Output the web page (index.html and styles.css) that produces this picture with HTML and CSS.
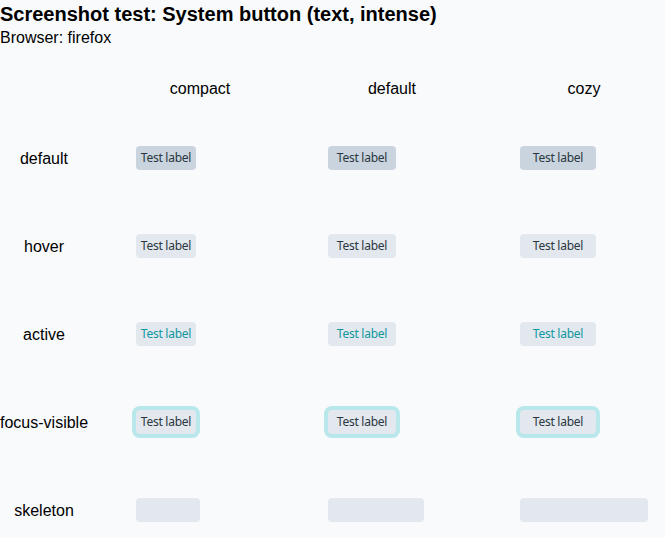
FILE: index.html
```html
<!DOCTYPE html>
<html>
<head>
<meta charset="utf-8">
<link rel="stylesheet" href="styles.css">
</head>
<body>
<header class="head">
  <h1 class="title">Screenshot test: System button (text, intense)</h1>
  <p class="browser">Browser: firefox</p>
</header>
<div class="matrix">
  <div class="corner"></div>
  <div class="colhead">compact</div>
  <div class="colhead">default</div>
  <div class="colhead">cozy</div>

  <div class="rowhead">default</div>
  <div class="cell"><button class="btn compact">Test label</button></div>
  <div class="cell"><button class="btn regular">Test label</button></div>
  <div class="cell"><button class="btn cozy">Test label</button></div>

  <div class="rowhead">hover</div>
  <div class="cell"><button class="btn compact hover">Test label</button></div>
  <div class="cell"><button class="btn regular hover">Test label</button></div>
  <div class="cell"><button class="btn cozy hover">Test label</button></div>

  <div class="rowhead">active</div>
  <div class="cell"><button class="btn compact active">Test label</button></div>
  <div class="cell"><button class="btn regular active">Test label</button></div>
  <div class="cell"><button class="btn cozy active">Test label</button></div>

  <div class="rowhead">focus-visible</div>
  <div class="cell"><button class="btn compact focus">Test label</button></div>
  <div class="cell"><button class="btn regular focus">Test label</button></div>
  <div class="cell"><button class="btn cozy focus">Test label</button></div>

  <div class="rowhead">skeleton</div>
  <div class="cell"><span class="skeleton sk-compact"></span></div>
  <div class="cell"><span class="skeleton sk-regular"></span></div>
  <div class="cell"><span class="skeleton sk-cozy"></span></div>
</div>
</body>
</html>
```
FILE: styles.css
```css
html, body {
  margin: 0;
  padding: 0;
  background: #f8fafc;
  font-family: "Liberation Sans", Arial, sans-serif;
  color: #000;
}
.head {
  padding: 0;
}
.title {
  margin: 0;
  font-size: 20px;
  line-height: 29px;
  font-weight: bold;
}
.browser {
  margin: 0;
  font-size: 16px;
  line-height: 18px;
}
.matrix {
  margin-top: 15px;
  display: grid;
  grid-template-columns: 104px 192px 192px 192px;
  grid-template-rows: 52px repeat(5, 88px);
  align-items: center;
}
.colhead {
  text-align: center;
  font-size: 16px;
  padding-top: 2px;
}
.rowhead {
  width: 88px;
  text-align: center;
  font-size: 16px;
  white-space: nowrap;
  padding-top: 2px;
}
.cell {
  padding-left: 32px;
  display: flex;
  align-items: center;
}
.btn {
  font-family: "Noto Sans", sans-serif;
  font-size: 12px;
  letter-spacing: -0.25px;
  line-height: 24px;
  height: 24px;
  border: 0;
  border-radius: 4px;
  margin: 0;
  background: #c9d4de;
  color: #2b3640;
  cursor: pointer;
  white-space: nowrap;
}
.compact { padding: 0 2px; width: 60px; }
.regular { padding: 0 6px; width: 68px; }
.cozy { padding: 0 10px; width: 76px; }
.hover { background: #e2e8ee; }
.active { background: #e2e8ee; color: #11979f; }
.focus {
  background: #e2e8ee;
  box-shadow: 0 0 0 4px #b8e8eb;
  border-radius: 4px;
}
.skeleton {
  display: block;
  height: 24px;
  border-radius: 4px;
  background: #e2e8ee;
}
.sk-compact { width: 64px; }
.sk-regular { width: 96px; }
.sk-cozy { width: 128px; }
```
